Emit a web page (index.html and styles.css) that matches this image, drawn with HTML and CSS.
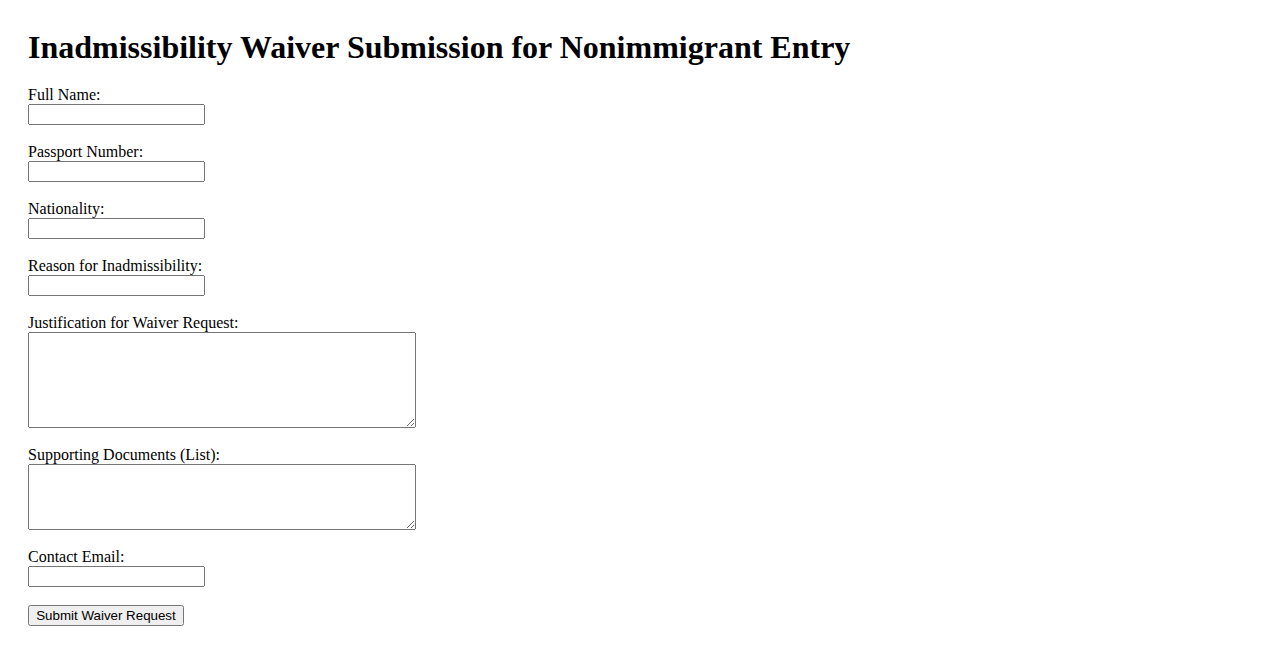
FILE: index.html
```html
<!DOCTYPE html>
<html lang="en">
<head>
<meta charset="utf-8">
<title>Inadmissibility Waiver Submission</title>
<link rel="stylesheet" href="styles.css">
</head>
<body>
<h1 class="title">Inadmissibility Waiver Submission for Nonimmigrant Entry</h1>
<form class="waiver-form">
<label for="name">Full Name:</label><br>
<input class="field" type="text" id="name"><br><br>
<label for="passport">Passport Number:</label><br>
<input class="field" type="text" id="passport"><br><br>
<label for="nationality">Nationality:</label><br>
<input class="field" type="text" id="nationality"><br><br>
<label for="reason">Reason for Inadmissibility:</label><br>
<input class="field" type="text" id="reason"><br><br>
<label for="justification">Justification for Waiver Request:</label><br>
<textarea class="area area-tall" id="justification"></textarea><br><br>
<label for="documents">Supporting Documents (List):</label><br>
<textarea class="area area-short" id="documents"></textarea><br><br>
<label for="email">Contact Email:</label><br>
<input class="field" type="email" id="email"><br><br>
<button class="submit" type="submit">Submit Waiver Request</button>
</form>
</body>
</html>
```
FILE: styles.css
```css
body {
  margin: 0;
  padding: 29px 28px 28px;
  font-family: "Liberation Serif", "Times New Roman", serif;
  font-size: 16px;
  color: #000;
  background: #fff;
}

.title {
  margin: 0 0 20px;
  font-size: 32px;
  font-weight: bold;
}

.field {
  box-sizing: border-box;
  width: 177px;
  height: 21px;
  font-family: "Liberation Sans", Arial, sans-serif;
  font-size: 13.333px;
}

.area {
  box-sizing: border-box;
  width: 388px;
  vertical-align: top;
  font-family: "Liberation Mono", monospace;
  font-size: 13.333px;
}

.area-tall {
  height: 96px;
}

.area-short {
  height: 66px;
}

.submit {
  box-sizing: border-box;
  width: 156px;
  height: 21px;
  font-family: "Liberation Sans", Arial, sans-serif;
  font-size: 13.333px;
}
```
